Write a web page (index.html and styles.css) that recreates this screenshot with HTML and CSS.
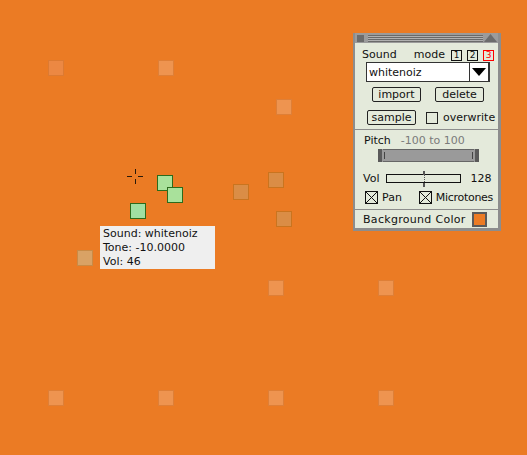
FILE: index.html
```html
<!DOCTYPE html>
<html>
<head>
<meta charset="utf-8">
<link rel="stylesheet" href="styles.css">
</head>
<body>
<div class="canvas">
  <div class="sq light dim p1"></div>
  <div class="sq light p2"></div>
  <div class="sq light p3"></div>
  <div class="sq light p4"></div>
  <div class="sq light p5"></div>
  <div class="sq light p6"></div>
  <div class="sq light p7"></div>
  <div class="sq light p8"></div>
  <div class="sq light p9"></div>
  <div class="sq brown b1"></div>
  <div class="sq brown b2"></div>
  <div class="sq brown b3"></div>
  <div class="sq tan b4"></div>
  <div class="sq green g1"></div>
  <div class="sq green g2"></div>
  <div class="sq green g3"></div>
  <svg class="cross" width="17" height="17" viewBox="0 0 17 17">
    <path d="M0 7.5H5M11 7.5H16M8.5 0V5M8.5 10V15" stroke="#2a1a0a" stroke-width="1"/>
  </svg>
  <div class="tooltip">
    <div>Sound: whitenoiz</div>
    <div>Tone: -10.0000</div>
    <div>Vol: 46</div>
  </div>

  <div class="panel">
    <div class="titlebar">
      <span class="tb-close"></span>
      <span class="tb-grip"></span>
      <svg class="tb-collapse" width="13" height="8" viewBox="0 0 13 8"><path d="M0 8L6.5 0L13 8Z" fill="#6c6c6c"/></svg>
    </div>
    <div class="sec sec1">
      <div class="row row-mode">
        <span>Sound</span>
        <div class="mode">
          <span class="mode-label">mode</span>
          <span class="mbox">1</span>
          <span class="mbox">2</span>
          <span class="mbox active">3</span>
        </div>
      </div>
      <div class="select">
        <span class="select-val">whitenoiz</span>
        <span class="select-btn"><svg width="14" height="8" viewBox="0 0 14 8"><path d="M0 0H14L7 8Z" fill="#000"/></svg></span>
      </div>
      <div class="row row-btns">
        <span class="btn">import</span>
        <span class="btn">delete</span>
      </div>
      <div class="row row-sample">
        <span class="btn">sample</span>
        <span class="cb"></span>
        <span class="cb-label">overwrite</span>
      </div>
    </div>
    <div class="sec sec2">
      <div class="row row-pitch">
        <span>Pitch</span>
        <span class="hint">-100 to 100</span>
      </div>
      <div class="pitch-slider"><span class="cap left"></span><span class="cap right"></span></div>
      <div class="row row-vol">
        <span>Vol</span>
        <div class="vol-track"><span class="vol-thumb"></span></div>
        <span class="vol-num">128</span>
      </div>
      <div class="row row-cbs">
        <svg class="xcb" width="13" height="13" viewBox="0 0 13 13"><rect x="0.5" y="0.5" width="12" height="12" fill="none" stroke="#111"/><path d="M1 1L12 12M12 1L1 12" stroke="#111"/></svg>
        <span class="cb-text">Pan</span>
        <svg class="xcb xcb2" width="13" height="13" viewBox="0 0 13 13"><rect x="0.5" y="0.5" width="12" height="12" fill="none" stroke="#111"/><path d="M1 1L12 12M12 1L1 12" stroke="#111"/></svg>
        <span class="cb-text tight">Microtones</span>
      </div>
    </div>
    <div class="sec sec3">
      <span class="wide">Background Color</span>
      <span class="swatch"></span>
    </div>
  </div>
</div>
</body>
</html>
```

FILE: styles.css
```css
html, body {
  margin: 0;
  padding: 0;
  width: 527px;
  height: 455px;
  overflow: hidden;
  background: #eb7b24;
}

.canvas {
  position: relative;
  width: 527px;
  height: 455px;
  font-family: "DejaVu Sans", Verdana, sans-serif;
}

.sq {
  position: absolute;
  width: 16px;
  height: 16px;
  box-sizing: border-box;
  border: 1px solid;
}
.light { background: #ee9450; border-color: #de7f37; }
.light.dim { background: #ec8843; border-color: #dc7a32; }
.brown { background: #da8d46; border-color: #c9741f; }
.tan { background: #d9a265; border-color: #c98a45; }
.green { background: #a9e19b; border-color: #2c6b1c; }
.green.g3 { background: #a0e0a2; }

.p1 { left: 48px; top: 60px; }
.p2 { left: 158px; top: 60px; }
.p3 { left: 276px; top: 99px; }
.p4 { left: 268px; top: 280px; }
.p5 { left: 378px; top: 280px; }
.p6 { left: 48px; top: 390px; }
.p7 { left: 158px; top: 390px; }
.p8 { left: 268px; top: 390px; }
.p9 { left: 378px; top: 390px; }
.b1 { left: 233px; top: 184px; }
.b2 { left: 268px; top: 172px; }
.b3 { left: 276px; top: 211px; }
.b4 { left: 77px; top: 250px; }
.g1 { left: 157px; top: 175px; }
.g2 { left: 167px; top: 187px; }
.g3 { left: 130px; top: 203px; }

.cross {
  position: absolute;
  left: 127px;
  top: 169px;
}

.tooltip {
  position: absolute;
  left: 100px;
  top: 226px;
  width: 115px;
  height: 43px;
  box-sizing: border-box;
  padding: 1px 0 0 3px;
  background: #efefef;
  color: #111;
  font-size: 11px;
  line-height: 14px;
}

.panel {
  position: absolute;
  left: 353px;
  top: 33px;
  width: 148px;
  height: 198px;
  box-sizing: border-box;
  border: 2px solid #8d8d8d;
  border-top: 0;
  border-right-width: 3px;
  border-bottom-width: 3px;
  background: #e4eadb;
  display: flex;
  flex-direction: column;
  font-size: 11px;
  line-height: 13px;
  color: #111;
}

.titlebar {
  height: 10px;
  flex: none;
  background: #9b9b9b;
  display: flex;
  align-items: center;
  padding: 0 1px 0 2px;
}
.tb-close {
  width: 7px;
  height: 7px;
  background: #6c6c6c;
}
.tb-grip {
  flex: 1;
  height: 7px;
  margin: 0 1px 0 4px;
  background: repeating-linear-gradient(to bottom, #6a6a6a 0 1px, #b0b0b0 1px 2px);
}
.tb-collapse { display: block; }

.sec { box-sizing: border-box; flex: none; }
.sec1 {
  height: 87px;
  padding-top: 5px;
  border-bottom: 1px solid #8d8d8d;
}
.sec2 {
  height: 80px;
  padding-top: 4px;
  border-bottom: 1px solid #8d8d8d;
}
.sec3 {
  flex: 1;
  display: flex;
  align-items: center;
  justify-content: space-between;
  padding: 1px 11px 0 8px;
}

.row { display: flex; align-items: center; }

.row-mode {
  height: 13px;
  justify-content: space-between;
  padding: 0 4px 0 7px;
}
.mode { display: flex; align-items: center; gap: 5px; }
.mode-label { margin-right: 1px; }
.mbox {
  width: 11px;
  height: 11px;
  box-sizing: border-box;
  border: 1px solid #111;
  font-size: 9px;
  line-height: 9px;
  text-align: center;
  margin-top: 1px;
  overflow: hidden;
}
.mbox.active { border-color: #f00; color: #f00; }

.select {
  margin: 1px 8px 0 11px;
  height: 20px;
  box-sizing: border-box;
  border: 1px solid #333;
  border-right-width: 2px;
  background: #fff;
  display: flex;
}
.select-val {
  flex: 1;
  padding-left: 2px;
  display: flex;
  align-items: center;
  font-size: 11px;
}
.select-btn {
  width: 18px;
  border-left: 1px solid #333;
  display: flex;
  align-items: center;
  justify-content: center;
  background: #fff;
}
.select-btn svg { display: block; }

.btn {
  width: 49px;
  height: 15px;
  box-sizing: border-box;
  border: 1px solid #222;
  border-radius: 2px;
  display: flex;
  align-items: center;
  justify-content: center;
  line-height: 13px;
}
.row-btns { margin-top: 5px; padding-left: 17px; gap: 14px; }
.row-sample { margin-top: 8px; padding-left: 12px; }
.cb {
  width: 12px;
  height: 12px;
  box-sizing: border-box;
  border: 1px solid #222;
  margin-left: 10px;
}
.cb-label { margin-left: 5px; }

.row-pitch { height: 13px; padding-left: 9px; }
.hint { color: #7a7a7a; margin-left: 10px; }

.pitch-slider {
  position: relative;
  margin: 2px 0 0 23px;
  width: 101px;
  height: 13px;
  box-sizing: border-box;
  border-top: 1px solid #666;
  border-bottom: 1px solid #666;
  background: #9a9a9a;
}
.cap {
  position: absolute;
  top: -1px;
  bottom: -1px;
  width: 4px;
  background: #5a5a5a;
}
.cap.left { left: 0; border-right: 1px solid #9a9a9a; }
.cap.left::after, .cap.right::after {
  content: "";
  position: absolute;
  top: 3px;
  bottom: 3px;
  width: 1px;
  background: #444;
}
.cap.left::after { left: 6px; }
.cap.right { right: 0; border-left: 1px solid #9a9a9a; }
.cap.right::after { right: 6px; }

.row-vol { margin-top: 8px; height: 16px; padding-left: 8px; }
.vol-track {
  position: relative;
  margin-left: 7px;
  width: 75px;
  height: 9px;
  box-sizing: border-box;
  border: 1px solid #111;
}
.vol-thumb {
  position: absolute;
  left: 36px;
  top: -4px;
  width: 2px;
  height: 16px;
  background:
    linear-gradient(#555, #555) top / 2px 4px no-repeat,
    linear-gradient(#555, #555) bottom / 2px 4px no-repeat,
    repeating-linear-gradient(to bottom, #555 0 1px, transparent 1px 2px) center / 1px 100% no-repeat;
}
.vol-num { margin-left: 9px; }

.row-cbs { margin-top: 5px; height: 13px; padding-left: 10px; }
.xcb { display: block; flex: none; }
.xcb2 { margin-left: 17px; }
.cb-text { margin-left: 4px; }
.tight { letter-spacing: -0.3px; }
.wide { letter-spacing: 0.3px; }

.swatch {
  width: 15px;
  height: 15px;
  box-sizing: border-box;
  border: 2px solid #5a5a5a;
  background: #eb7b24;
}
```
